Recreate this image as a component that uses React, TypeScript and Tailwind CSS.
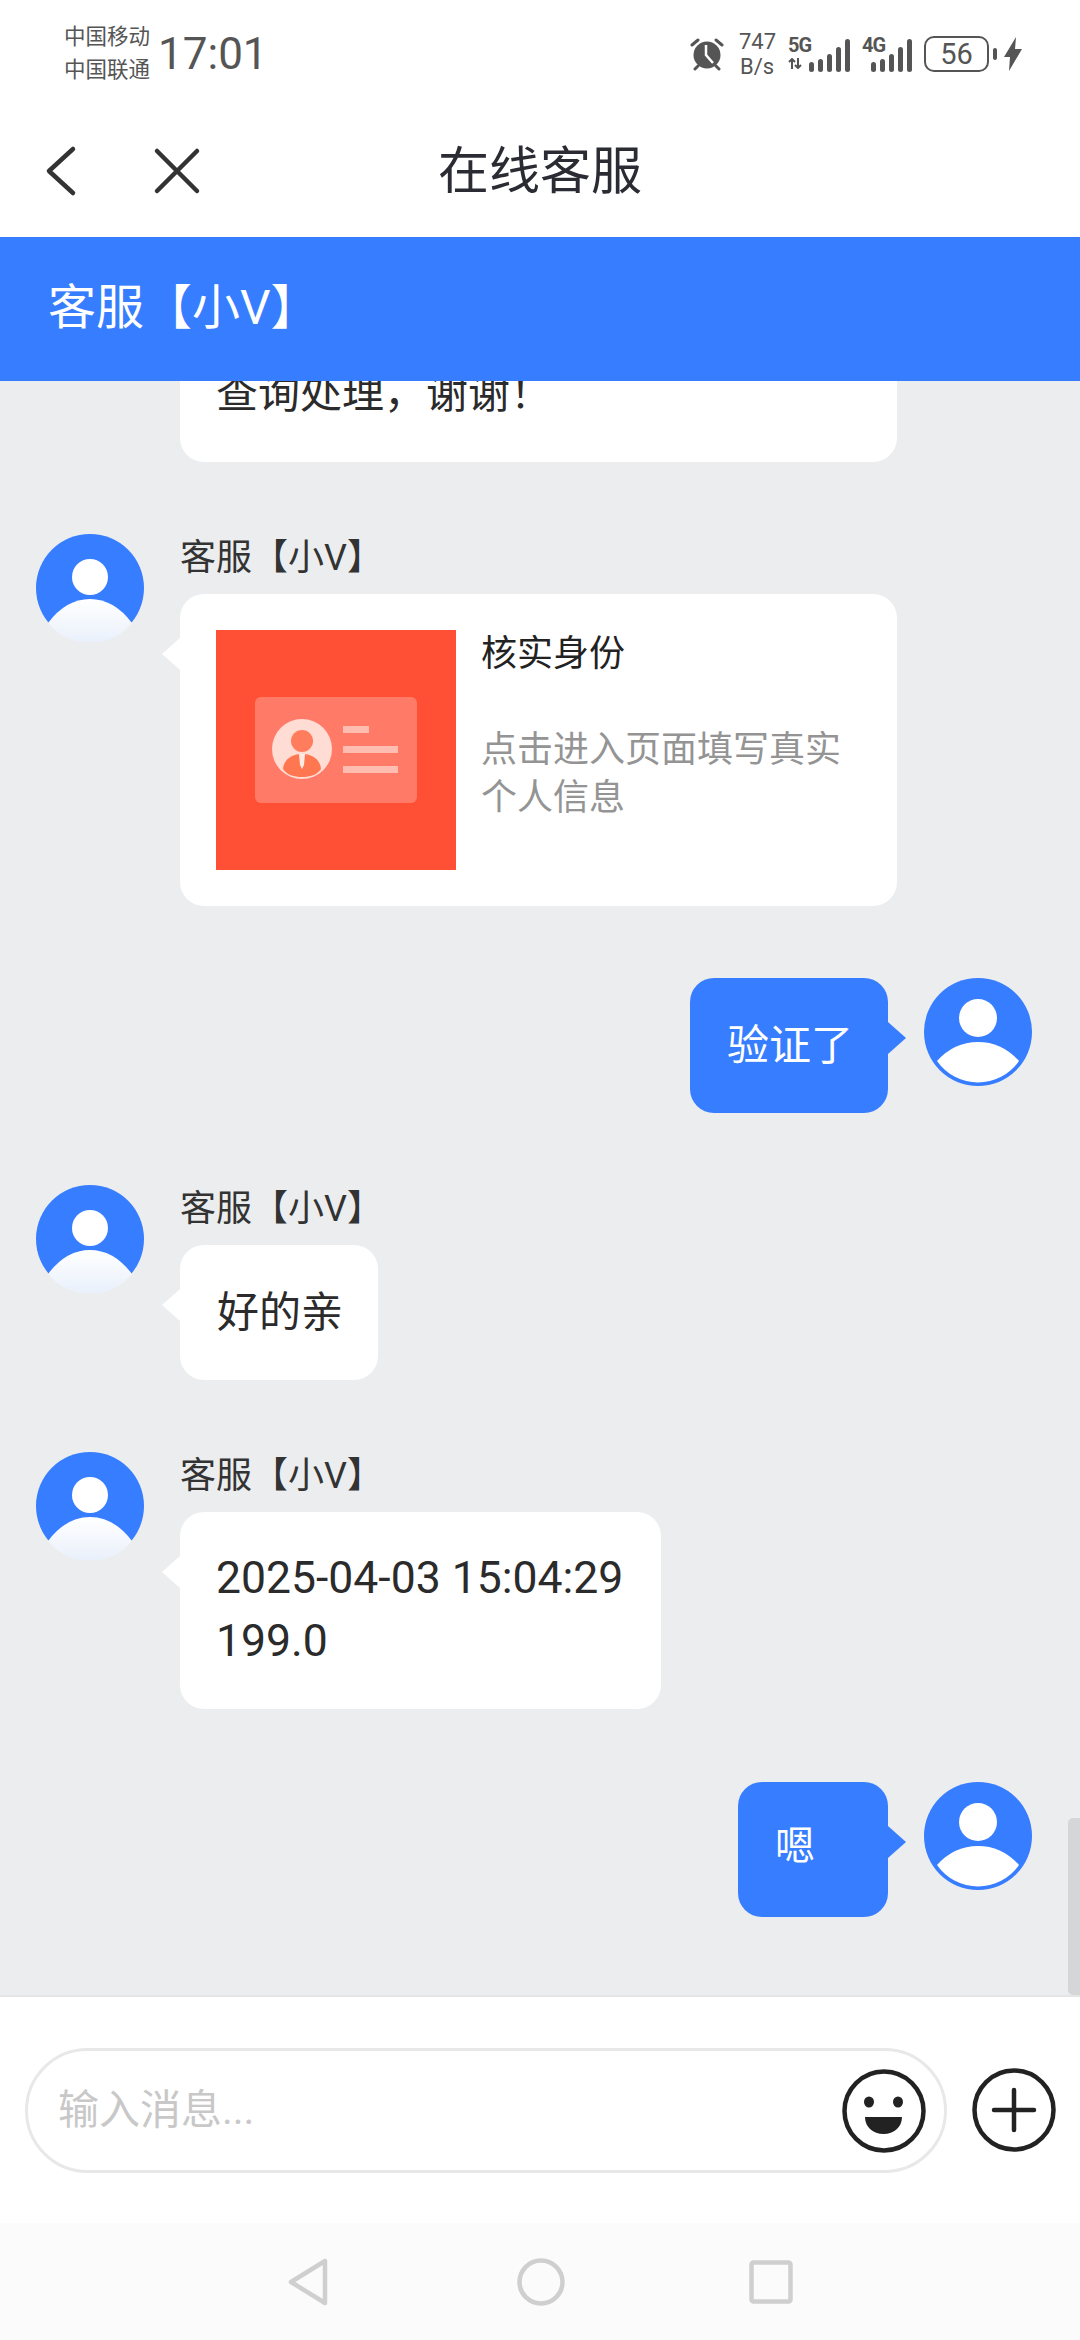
import type { ReactNode } from 'react';

const BLUE = '#377dff';

function StatusIcons() {
  return (
    <div className="flex items-center h-[36px] text-[#555]">
      {/* alarm */}
      <svg width="34" height="34" viewBox="0 0 34 34" className="mr-[15px]">
        <circle cx="17" cy="18" r="13.5" fill="#555" />
        <path d="M16 8v10l7 8" fill="none" stroke="#fff" strokeWidth="2.5" />
        <path d="M2 8l6-5M32 8l-6-5M5 32l3-3M29 32l-3-3" stroke="#555" strokeWidth="3" strokeLinecap="round" />
      </svg>
      <div className="w-[36px] text-center text-[22px] leading-[25px] mr-[13px] whitespace-nowrap">
        <div>747</div>
        <div>B/s</div>
      </div>
      <div className="relative w-[62px] h-[36px] mr-[12px]">
        <span className="absolute left-0 -top-[1px] text-[20px] font-bold leading-[20px] tracking-[-1px]">5G</span>
        <svg width="14" height="11" viewBox="0 0 14 11" className="absolute left-0 bottom-[3px]">
          <path d="M4 11V2M1 4l3-3 3 3" fill="none" stroke="#555" strokeWidth="2" />
          <path d="M10 0v9M7 7l3 3 3-3" fill="none" stroke="#555" strokeWidth="2" />
        </svg>
        <Bars />
      </div>
      <div className="relative w-[50px] h-[36px] mr-[12px]">
        <span className="absolute left-0 -top-[1px] text-[20px] font-bold leading-[20px] tracking-[-1px]">4G</span>
        <Bars />
      </div>
      <div className="w-[65px] h-[36px] rounded-[10px] border-[2.5px] border-[#555] flex items-center justify-center text-[29px] leading-none mr-[4px]">56</div>
      <div className="w-[4px] h-[12px] rounded-sm bg-[#555] mr-[7px]" />
      <svg width="18" height="34" viewBox="0 0 18 34">
        <path d="M12 0L0 20h6l-1 14L18 12h-7z" fill="#555" />
      </svg>
    </div>
  );
}

function Bars() {
  const heights = [10, 13, 18, 25, 33];
  return (
    <div className="absolute right-0 bottom-0 flex items-end gap-[4px]">
      {heights.map((h, i) => (
        <div key={i} className="w-[5px] rounded-full bg-[#555]" style={{ height: h }} />
      ))}
    </div>
  );
}

function AgentAvatar() {
  return (
    <svg width="108" height="108" viewBox="0 0 108 108" className="shrink-0">
      <defs>
        <linearGradient id="bodyFade" x1="0" y1="0" x2="0" y2="1">
          <stop offset="0" stopColor="#ffffff" />
          <stop offset="1" stopColor="#e9f0fb" />
        </linearGradient>
      </defs>
      <circle cx="54" cy="54" r="54" fill={BLUE} />
      <circle cx="54" cy="43" r="18" fill="#fff" />
      <path d="M12 89Q30 65 54 65Q78 65 96 89A54 54 0 0 1 12 89Z" fill="url(#bodyFade)" />
    </svg>
  );
}

function UserAvatar() {
  return (
    <svg width="108" height="108" viewBox="0 0 108 108" className="shrink-0">
      <circle cx="54" cy="54" r="54" fill={BLUE} />
      <circle cx="54" cy="40" r="19" fill="#fff" />
      <path d="M13 83Q30 64 54 64Q78 64 95 83A50 50 0 0 1 13 83Z" fill="#fff" />
    </svg>
  );
}

function AgentRow({ children, className }: { children: ReactNode; className: string }) {
  return (
    <div className="flex pl-[36px]">
      <AgentAvatar />
      <div className="ml-[36px] flex flex-col items-start">
        <div className="text-[36px] leading-[48px] mb-[12px] text-[#333]">客服【小V】</div>
        <div className={`relative bg-white rounded-[24px] ${className}`}>
          <div className="absolute left-[-18px] top-[44px] border-y-[16px] border-y-transparent border-r-[18px] border-r-white" />
          {children}
        </div>
      </div>
    </div>
  );
}

function UserRow({ children, className }: { children: ReactNode; className: string }) {
  return (
    <div className="flex justify-end items-start pr-[48px]">
      <div className={`relative rounded-[24px] text-white ${className}`} style={{ backgroundColor: BLUE }}>
        <div className="absolute right-[-18px] top-[44px] border-y-[16px] border-y-transparent border-l-[18px] border-l-[#377dff]" />
        {children}
      </div>
      <div className="ml-[36px]">
        <UserAvatar />
      </div>
    </div>
  );
}

export default function App() {
  return (
    <div
      className="w-[1080px] h-[2340px] flex flex-col overflow-hidden bg-white"
      style={{ fontFamily: 'Roboto, "Noto Sans CJK SC", sans-serif' }}
    >
      {/* status bar */}
      <div className="h-[105px] shrink-0 flex items-start justify-between pl-[64px] pr-[58px] pt-[19px]">
        <div className="flex items-center">
          <div className="text-[21.5px] leading-[33px] text-[#555]">
            <div>中国移动</div>
            <div>中国联通</div>
          </div>
          <div className="ml-[8px] mt-[2px] text-[44px] leading-[66px] text-[#555]">17:01</div>
        </div>
        <div className="pt-[17px]">
          <StatusIcons />
        </div>
      </div>

      {/* title bar */}
      <div className="h-[132px] shrink-0 grid grid-cols-[1fr_auto_1fr] items-center">
        <div className="flex items-center pl-[40px]">
          <svg width="44" height="60" viewBox="0 0 44 60">
            <path d="M33 8L9 30l24 22" fill="none" stroke="#333" strokeWidth="4.5" strokeLinecap="round" strokeLinejoin="round" />
          </svg>
          <svg width="60" height="60" viewBox="0 0 60 60" className="ml-[63px]">
            <path d="M10 10l40 40M50 10L10 50" fill="none" stroke="#333" strokeWidth="4.5" strokeLinecap="round" />
          </svg>
        </div>
        <div className="text-[51px] leading-none text-[#2a2b33]">在线客服</div>
      </div>

      {/* agent banner */}
      <div className="h-[144px] shrink-0 flex items-center pl-[48px] pb-[3px] text-[48px] text-white" style={{ backgroundColor: BLUE }}>
        客服【小V】
      </div>

      {/* messages */}
      <div className="flex-1 min-h-0 relative bg-[#ecedef] border-b-[2px] border-b-[#e4e5e7] overflow-hidden flex flex-col justify-end pb-[78px] text-[42px] leading-[63px] text-[#2b2b2b]">
        <div className="pl-[180px] mb-[72px]">
          <div className="w-[717px] bg-white rounded-[24px] px-[36px] pt-[36px] pb-[37px]">
            <div>查询处理，谢谢！</div>
          </div>
        </div>

        <div className="mb-[72px]">
          <AgentRow className="w-[717px] h-[312px] p-[36px] flex">
            <svg width="240" height="240" viewBox="0 0 240 240" className="shrink-0">
              <rect width="240" height="240" fill="#ff5035" />
              <rect x="39" y="67" width="162" height="106" rx="6" fill="#ff7b68" />
              <circle cx="86" cy="119" r="30" fill="#ffdcd4" />
              <circle cx="86" cy="111" r="11" fill="#ff7d5c" />
              <path d="M67 139c1-10 9-15 19-15s18 5 19 15c-4 6-11 8-19 8s-15-2-19-8z" fill="#ff7750" />
              <path d="M83 124h6l-1 11-2 4-2-4z" fill="#ffe9e3" />
              <rect x="127" y="96" width="26" height="7" fill="#ffbcb0" />
              <rect x="127" y="116" width="55" height="7" fill="#ffbcb0" />
              <rect x="127" y="136" width="55" height="7" fill="#ffbcb0" />
            </svg>
            <div className="ml-[25px] flex-1 min-w-0">
              <div className="text-[36px] leading-[48px] text-[#222]">核实身份</div>
              <div className="mt-[48px] w-[370px] text-[36px] leading-[48px] text-[#949494]">点击进入页面填写真实个人信息</div>
            </div>
          </AgentRow>
        </div>

        <div className="mb-[72px]">
          <UserRow className="w-[198px] h-[135px] pl-[37px] py-[36px]">
            <div className="whitespace-nowrap">验证了</div>
          </UserRow>
        </div>

        <div className="mb-[72px]">
          <AgentRow className="w-[198px] h-[135px] pl-[37px] py-[36px]">
            <div className="whitespace-nowrap">好的亲</div>
          </AgentRow>
        </div>

        <div className="mb-[73px]">
          <AgentRow className="w-[481px] h-[197px] px-[36px] py-[35px] text-[44.5px]">
            <div className="whitespace-nowrap">2025-04-03 15:04:29</div>
            <div>199.0</div>
          </AgentRow>
        </div>

        <UserRow className="w-[150px] h-[135px] pl-[37px] pt-[33px] text-[40px]">
          <div>嗯</div>
        </UserRow>

        {/* scrollbar */}
        <div className="absolute right-0 bottom-0 w-[12px] h-[177px] rounded-l-[5px] bg-[#d5d6d8]" />
      </div>

      {/* input */}
      <div className="h-[226px] shrink-0 flex items-start pl-[25px] pt-[51px] bg-white">
        <div className="w-[922px] h-[125px] rounded-full border-[3px] border-[#e8e8e8] flex items-center justify-between pl-[30px] pr-[18px]">
          <span className="text-[41px] text-[#c8c8c8]">输入消息...</span>
          <svg width="84" height="84" viewBox="0 0 84 84">
            <circle cx="42" cy="42" r="39.5" fill="none" stroke="#222" strokeWidth="4.5" />
            <ellipse cx="27" cy="33" rx="5" ry="5.5" fill="#222" />
            <ellipse cx="56" cy="33" rx="5" ry="5.5" fill="#222" />
            <path d="M23 48h37c0 10-8 17-18.5 17S23 58 23 48z" fill="#222" />
          </svg>
        </div>
        <svg width="84" height="84" viewBox="0 0 84 84" className="ml-[25px] mt-[20px]">
          <circle cx="42" cy="42" r="39.5" fill="none" stroke="#222" strokeWidth="4.5" />
          <path d="M42 22v40M22 42h40" stroke="#222" strokeWidth="4.5" strokeLinecap="round" />
        </svg>
      </div>

      {/* system nav */}
      <div className="h-[117px] shrink-0 flex items-start justify-center pt-[35px] bg-[#fbfbfb]">
        <svg width="40" height="48" viewBox="0 0 40 48" className="mr-[189px]">
          <path d="M37 3v42L3 24z" fill="none" stroke="#cfcfcf" strokeWidth="4.5" strokeLinejoin="round" />
        </svg>
        <svg width="48" height="48" viewBox="0 0 48 48" className="mr-[184px]">
          <circle cx="24" cy="24" r="21.5" fill="none" stroke="#cfcfcf" strokeWidth="4.5" />
        </svg>
        <svg width="44" height="44" viewBox="0 0 44 44" className="mt-[2px]">
          <rect x="2.5" y="2.5" width="39" height="39" rx="2" fill="none" stroke="#cfcfcf" strokeWidth="4.5" />
        </svg>
      </div>
    </div>
  );
}
